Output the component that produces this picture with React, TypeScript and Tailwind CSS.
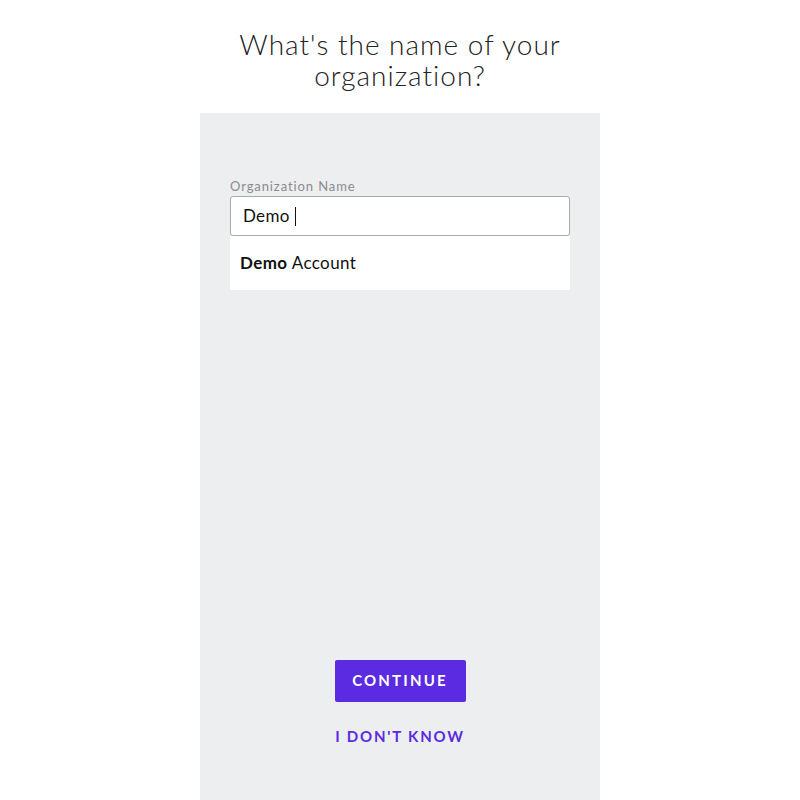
export default function App() {
  return (
    <div className="w-[800px] h-[800px] bg-white flex flex-col items-center font-['Lato',sans-serif] overflow-hidden">
      {/* Heading */}
      <h1 className="pt-[27px] h-[113px] flex flex-col items-center text-center text-[28px] leading-[34px] font-light text-[#222] tracking-[1px]">
        <span className="block">What's the name of your</span>
        <span className="block -mt-[3px]">organization?</span>
      </h1>

      {/* Panel */}
      <div className="w-[400px] flex-1 bg-[#edeef0] flex flex-col px-[30px]">
        <div className="pt-[65px] flex flex-col">
          <label className="text-[13px] leading-[16px] text-[#8a8b8e] tracking-[0.9px]">
            Organization Name
          </label>
          <div className="mt-[2px] h-[40px] bg-white border border-[#a9aaad] rounded-[3px] flex items-center px-[12px] text-[17px] text-[#111] tracking-[0.3px]">
            Demo <span className="ml-[5px] w-px h-[19px] bg-[#111]" />
          </div>
          <div className="h-[54px] bg-white flex items-center px-[10px] text-[17px] text-[#111] tracking-[0.4px]">
            <span className="font-bold">Demo</span>&nbsp;Account
          </div>
        </div>

        <div className="flex-1" />

        <div className="flex flex-col items-center pb-[53px]">
          <button className="w-[131px] h-[42px] bg-[#5a2be0] rounded-[2px] text-white text-[15px] font-bold tracking-[2.2px]">
            CONTINUE
          </button>
          <button className="mt-[23px] text-[#5a2be0] text-[15px] font-bold tracking-[1.8px]">
            I DON'T KNOW
          </button>
        </div>
      </div>
    </div>
  );
}
